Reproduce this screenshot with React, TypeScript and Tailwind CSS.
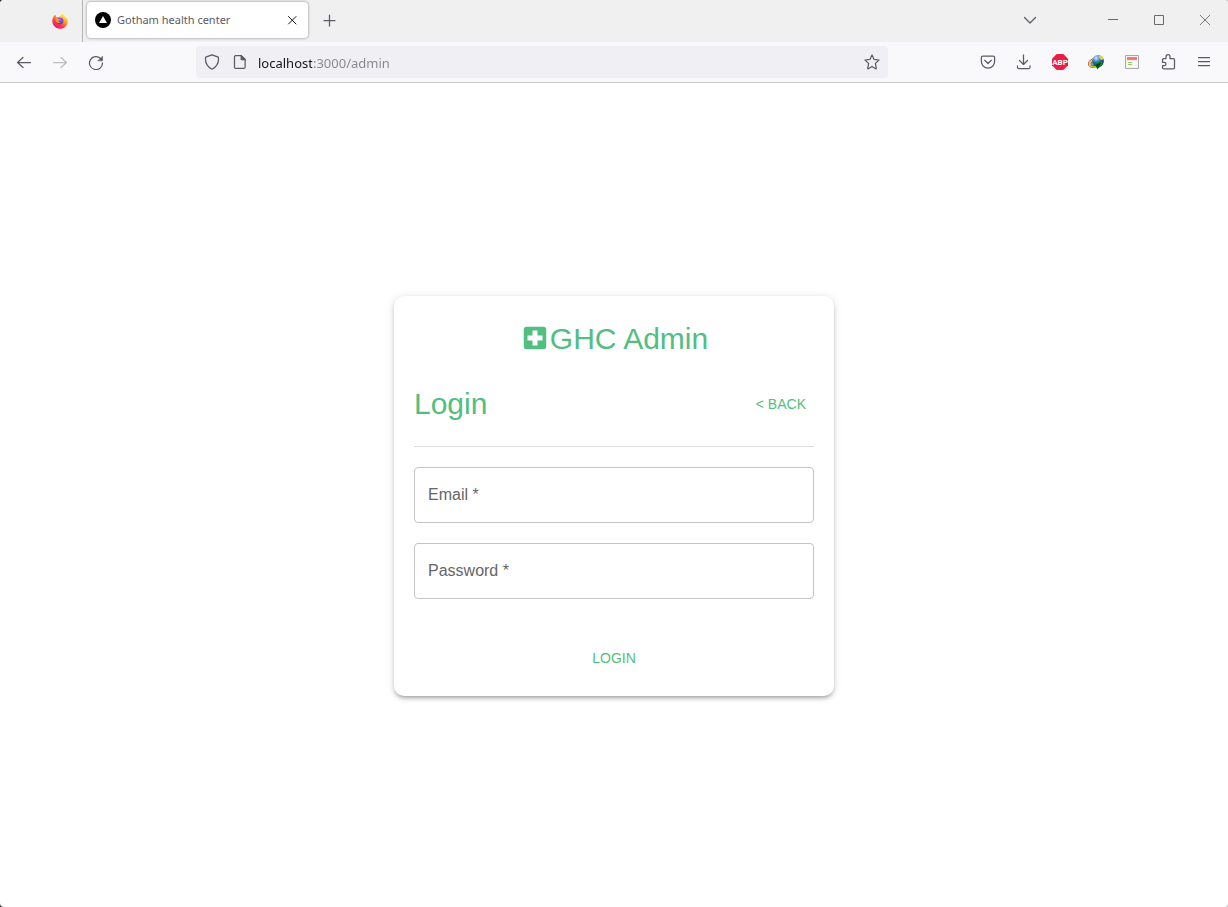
import { useState } from 'react';
import type { ReactNode } from 'react';
import { MdLocalHospital } from 'react-icons/md';

function Glyph({ children }: { children: ReactNode }) {
  return (
    <svg
      viewBox="0 0 16 16"
      className="size-4"
      fill="none"
      stroke="currentColor"
      strokeWidth="1.25"
      strokeLinecap="round"
      strokeLinejoin="round"
      aria-hidden="true"
    >
      {children}
    </svg>
  );
}

function ToolButton({ label, disabled, children }: { label: string; disabled?: boolean; children: ReactNode }) {
  return (
    <button
      type="button"
      aria-label={label}
      disabled={disabled}
      className="flex h-8 w-9 shrink-0 items-center justify-center rounded text-[#5b5b66] disabled:text-[#bcbcc1]"
    >
      {children}
    </button>
  );
}

function WindowButton({ label, children }: { label: string; children: ReactNode }) {
  return (
    <button type="button" aria-label={label} className="flex h-10 w-[46px] items-center justify-center text-[#6a6a6a]">
      <svg viewBox="0 0 12 12" className="size-3" fill="none" stroke="currentColor" aria-hidden="true">
        {children}
      </svg>
    </button>
  );
}

function FirefoxLogo() {
  return (
    <svg viewBox="0 0 16 16" className="size-4" aria-hidden="true">
      <defs>
        <linearGradient id="fox-body" x1="0.85" y1="0.05" x2="0.2" y2="0.95">
          <stop offset="0.1" stopColor="#fff44f" />
          <stop offset="0.4" stopColor="#ff9a2b" />
          <stop offset="0.7" stopColor="#ff3647" />
          <stop offset="1" stopColor="#e3167e" />
        </linearGradient>
        <radialGradient id="fox-globe" cx="0.5" cy="0.3" r="0.7">
          <stop offset="0" stopColor="#a05cff" />
          <stop offset="1" stopColor="#4a3fb5" />
        </radialGradient>
      </defs>
      <path
        d="M15.6 6.2c-.4-1-1.2-2-1.8-2.3.5 1 .7 1.6.8 2.1C13.500 3.600 12 2.700 10.600.2c-1 .7-1.600 2-1.700 3.100-.8 0-1.600.3-2.200.7-.8-.1-1.600 0-2.200.2C3.700 3.400 3.600 2.200 3.700 1.600c-1.700 1-2.500 2.400-2.700 3.100C.5 5.800.200 7.200.300 8.300.500 12.500 3.900 15.800 8.100 15.800c4 0 7.300-2.900 7.800-6.800.1-1 .1-1.900-.3-2.800z"
        fill="url(#fox-body)"
      />
      <circle cx="8" cy="8.100" r="3.300" fill="url(#fox-globe)" />
      <path d="M3.600 5.300c1.100-.5 2.400-.3 3 .6h1.700c0 .8-1.500 1-1.800 1.900-.2 1 .8 1.700 1.900 1.400-.8 1.200-3.100 1.200-4.100-.2-.6-.9-.9-2.300-.7-3.700z" fill="#ff9328" />
    </svg>
  );
}

function TabBar() {
  return (
    <div className="flex h-[42px] items-center bg-[#f0f0f0]">
      <button type="button" aria-label="Pinned tab" className="ml-8 flex h-10 w-[50px] items-center pl-5">
        <FirefoxLogo />
      </button>
      <div className="mr-1 h-full w-px bg-[#b3b3b3]" />
      <div className="mb-0.5 flex h-9 w-[221px] items-center rounded bg-white pr-2 pl-2 shadow-[0_0_3px_rgba(0,0,0,0.45)]">
        <svg viewBox="0 0 16 16" className="size-4 shrink-0" aria-hidden="true">
          <circle cx="8" cy="8" r="8" fill="#000" />
          <path d="M8 4l4 7H4z" fill="#fff" />
        </svg>
        <span className="ml-1.5 flex-1 truncate font-['Noto_Sans',sans-serif] text-[11px] leading-4 text-[#5b5b66]">
          Gotham health center
        </span>
        <button type="button" aria-label="Close tab" className="flex size-4 items-center justify-center text-[#15141a]">
          <svg viewBox="0 0 16 16" className="size-4" fill="none" stroke="currentColor" strokeLinecap="round" aria-hidden="true">
            <path d="M4.500 4.500l7.500 7.500M12 4.500L4.500 12" />
          </svg>
        </button>
      </div>
      <button type="button" aria-label="New tab" className="ml-1 flex size-9 items-center justify-center text-[#5b5b66]">
        <Glyph>
          <path d="M7.500 2v11M2 7.500h11" />
        </Glyph>
      </button>
      <div className="flex-1" />
      <button type="button" aria-label="List all tabs" className="mr-[42px] flex size-9 items-center justify-center text-[#5b5b66]">
        <Glyph>
          <path d="M2.500 4.500L8 10l5.500-5.500" />
        </Glyph>
      </button>
      <WindowButton label="Minimize">
        <path d="M1 4.500h10" />
      </WindowButton>
      <WindowButton label="Maximize">
        <path d="M1.500 .5h9v9h-9z" />
      </WindowButton>
      <WindowButton label="Close window">
        <path d="M1 0l10 10M11 0L1 10" strokeWidth="0.9" />
      </WindowButton>
    </div>
  );
}

function AddressBar() {
  const [url, setUrl] = useState('localhost:3000/admin');
  return (
    <div className="mx-[82px] flex h-8 flex-1 items-center rounded bg-[#f0f0f4] px-2 text-[#5b5b66]">
      <button type="button" aria-label="Tracking protection">
        <Glyph>
          <path d="M8 .8l6.300 2.300c.6 3.800-.3 9-6.300 12.100C2 12.100 1.100 6.900 1.700 3.100z" />
        </Glyph>
      </button>
      <button type="button" aria-label="Site information" className="ml-3">
        <Glyph>
          <path d="M3.500 1.600h5.700l3.900 3.900v7.700c0 .7-.5 1.200-1.200 1.200H3.700c-.7 0-1.200-.5-1.200-1.200V2.800c0-.7.500-1.200 1-1.200z" />
          <path d="M9.200 1.600v3.900h3.900z" fill="currentColor" />
        </Glyph>
      </button>
      <input
        type="text"
        aria-label="Address"
        value={url}
        onChange={(event) => setUrl(event.target.value)}
        className="ml-2.5 h-8 min-w-0 flex-1 bg-[linear-gradient(90deg,#15141a_54px,#85858d_54px)] bg-clip-text pt-0.5 font-['Noto_Sans',sans-serif] text-[13px] text-transparent caret-black outline-none"
      />
      <button type="button" aria-label="Bookmark this page">
        <Glyph>
          <path d="M8 .9l2.100 4.500 4.900.6-3.600 3.400.9 4.900c.1.400-.3.700-.7.500L8 12.500l-3.600 2.300c-.4.200-.8-.1-.7-.5l.9-4.900L1 6l4.900-.6z" />
        </Glyph>
      </button>
    </div>
  );
}

function Toolbar() {
  return (
    <div className="flex h-[41px] items-center border-b border-[#cccccc] bg-[#f9f9fb] px-1.5">
      <ToolButton label="Back">
        <Glyph>
          <path d="M1.500 8.500h13M7 3.500l-5.500 5 5.500 5" />
        </Glyph>
      </ToolButton>
      <ToolButton label="Forward" disabled>
        <Glyph>
          <path d="M1.500 8.500h13M9 3.500l5.500 5-5.500 5" />
        </Glyph>
      </ToolButton>
      <ToolButton label="Reload">
        <Glyph>
          <path d="M14.500 9A6.500 6.500 0 1 1 12.600 4.500" />
          <path d="M14.500 2.500v4.300h-4.300z" fill="currentColor" strokeWidth="0.6" />
        </Glyph>
      </ToolButton>
      <AddressBar />
      <ToolButton label="Save to Pocket">
        <Glyph>
          <path d="M2.800 2.200h10.400c.8 0 1.400.6 1.400 1.400v4a6.600 6.600 0 0 1-13.200 0v-4c0-.8.6-1.400 1.400-1.400z" />
          <path d="M4.700 6.300L8 9.500l3.300-3.200" />
        </Glyph>
      </ToolButton>
      <ToolButton label="Downloads">
        <Glyph>
          <path d="M7.500 .8v9.700M3.500 6.500l4 4 4-4M1.500 11.800v1.500c0 .7.500 1.200 1.200 1.200h10.100c.7 0 1.200-.5 1.200-1.200v-1.500" />
        </Glyph>
      </ToolButton>
      <ToolButton label="Adblock Plus">
        <svg viewBox="0 0 16 16" className="size-4" aria-hidden="true">
          <path d="M4.700 0h6.600L16 4.700v6.600L11.300 16H4.700L0 11.300V4.700z" fill="#ed1e45" />
          <text x="8" y="10.900" textAnchor="middle" fontFamily="Roboto, sans-serif" fontWeight="700" fontSize="8" fill="#fff">
            ABP
          </text>
        </svg>
      </ToolButton>
      <ToolButton label="Download manager">
        <svg viewBox="0 0 16 16" className="size-4" aria-hidden="true">
          <defs>
            <radialGradient id="idm-globe" cx="0.35" cy="0.25" r="0.75">
              <stop offset="0" stopColor="#d7efff" />
              <stop offset="0.4" stopColor="#3a86cf" />
              <stop offset="1" stopColor="#102b61" />
            </radialGradient>
          </defs>
          <ellipse cx="6" cy="9" rx="5.700" ry="4.300" transform="rotate(-20 6 9)" fill="#fff" stroke="#d83a2c" strokeWidth="0.9" />
          <ellipse cx="6.200" cy="9.100" rx="4.600" ry="3.400" transform="rotate(-20 6.200 9.100)" fill="none" stroke="#f2d21b" strokeWidth="1.300" />
          <ellipse cx="6.500" cy="9.300" rx="3.500" ry="2.400" transform="rotate(-20 6.500 9.300)" fill="#73b7e8" stroke="#35a745" strokeWidth="1.200" />
          <circle cx="10" cy="7" r="5.900" fill="url(#idm-globe)" />
          <path d="M10.500 1.300c2.500-.2 4.800 1.500 5.300 4l-2.800.6-1.500-1.700z" fill="#e0d243" />
          <path d="M5.500 8.500l4.300.2 4.400-1.400.4 3.400-5.400 4.500L8.200 11.800z" fill="#118420" />
          <path d="M8 10.500l5-2-2 4.500-2 2z" fill="#07440f" />
        </svg>
      </ToolButton>
      <ToolButton label="Reader extension">
        <svg viewBox="0 0 16 16" className="size-4" aria-hidden="true">
          <path d="M1.500 1.500h13v13h-13z" fill="#f4f4f4" stroke="#a9a9a9" />
          <path d="M3 3h10v3H3z" fill="#f77870" />
          <path d="M4 8.500h4M4 10.500h4" stroke="#9acb4b" />
          <path d="M9.500 8h3M9.500 10h3M4 12.500h7" stroke="#ffffff" />
        </svg>
      </ToolButton>
      <ToolButton label="Extensions">
        <Glyph>
          <path d="M6 4.500V2.700a2 2 0 0 1 4 0v1.800h3.300c.7 0 1.200.5 1.200 1.200v8c0 .7-.5 1.200-1.200 1.200H3.700c-.7 0-1.200-.5-1.200-1.200v-2h1.800a1.700 1.700 0 0 0 0-3.400H2.500V5.700c0-.7.500-1.200 1.200-1.200z" />
        </Glyph>
      </ToolButton>
      <ToolButton label="Open application menu">
        <Glyph>
          <path d="M2.500 3.500h11M2.500 7.500h11M2.500 11.500h11" />
        </Glyph>
      </ToolButton>
    </div>
  );
}

function OutlinedField({ id, label, type }: { id: string; label: string; type: string }) {
  return (
    <div className="relative">
      <input
        id={id}
        type={type}
        required
        placeholder=" "
        className="peer block h-14 w-full rounded border border-[#c4c4c4] bg-white px-[13px] text-base text-black/85 outline-none focus:border-[#52be80]"
      />
      <label
        htmlFor={id}
        className="pointer-events-none absolute top-4 left-3.5 bg-white text-base leading-[23px] text-[#666666] peer-focus:-top-3 peer-focus:text-xs peer-[:not(:placeholder-shown)]:-top-3 peer-[:not(:placeholder-shown)]:text-xs"
      >
        {label}
      </label>
    </div>
  );
}

function LoginCard() {
  return (
    <form
      onSubmit={(event) => event.preventDefault()}
      className="flex w-full max-w-[440px] flex-col gap-5 rounded-[10px] bg-white p-5 font-['Liberation_Sans',Arial,sans-serif] shadow-[0_3px_3px_-2px_rgba(0,0,0,0.2),0_3px_4px_0_rgba(0,0,0,0.14),0_1px_8px_0_rgba(0,0,0,0.12)]"
    >
      <h1 className="flex items-center justify-center text-[30px] leading-[45px] text-[#52be80]">
        <MdLocalHospital aria-hidden="true" />
        GHC Admin
      </h1>
      <div className="flex items-center justify-between text-[#52be80]">
        <h2 className="text-[30px] leading-[45px]">Login</h2>
        <button type="button" className="h-[37px] min-w-16 rounded px-2 pt-0.5 text-sm">
          &lt; BACK
        </button>
      </div>
      <hr className="border-[#dfdfdf]" />
      <OutlinedField id="email" label="Email *" type="email" />
      <OutlinedField id="password" label="Password *" type="password" />
      <button type="submit" className="mt-5 h-[37px] min-w-16 self-center rounded px-2 pt-0.5 text-sm text-[#52be80]">
        LOGIN
      </button>
    </form>
  );
}

export default function App() {
  return (
    <div className="bg-linear-to-r from-[#333333] to-[#c8c8c8]">
      <div className="flex min-h-screen flex-col overflow-hidden rounded bg-white">
        <header>
          <TabBar />
          <Toolbar />
        </header>
        <main className="flex flex-1 items-center justify-center px-4 pt-[17px] pb-4">
          <LoginCard />
        </main>
      </div>
    </div>
  );
}
